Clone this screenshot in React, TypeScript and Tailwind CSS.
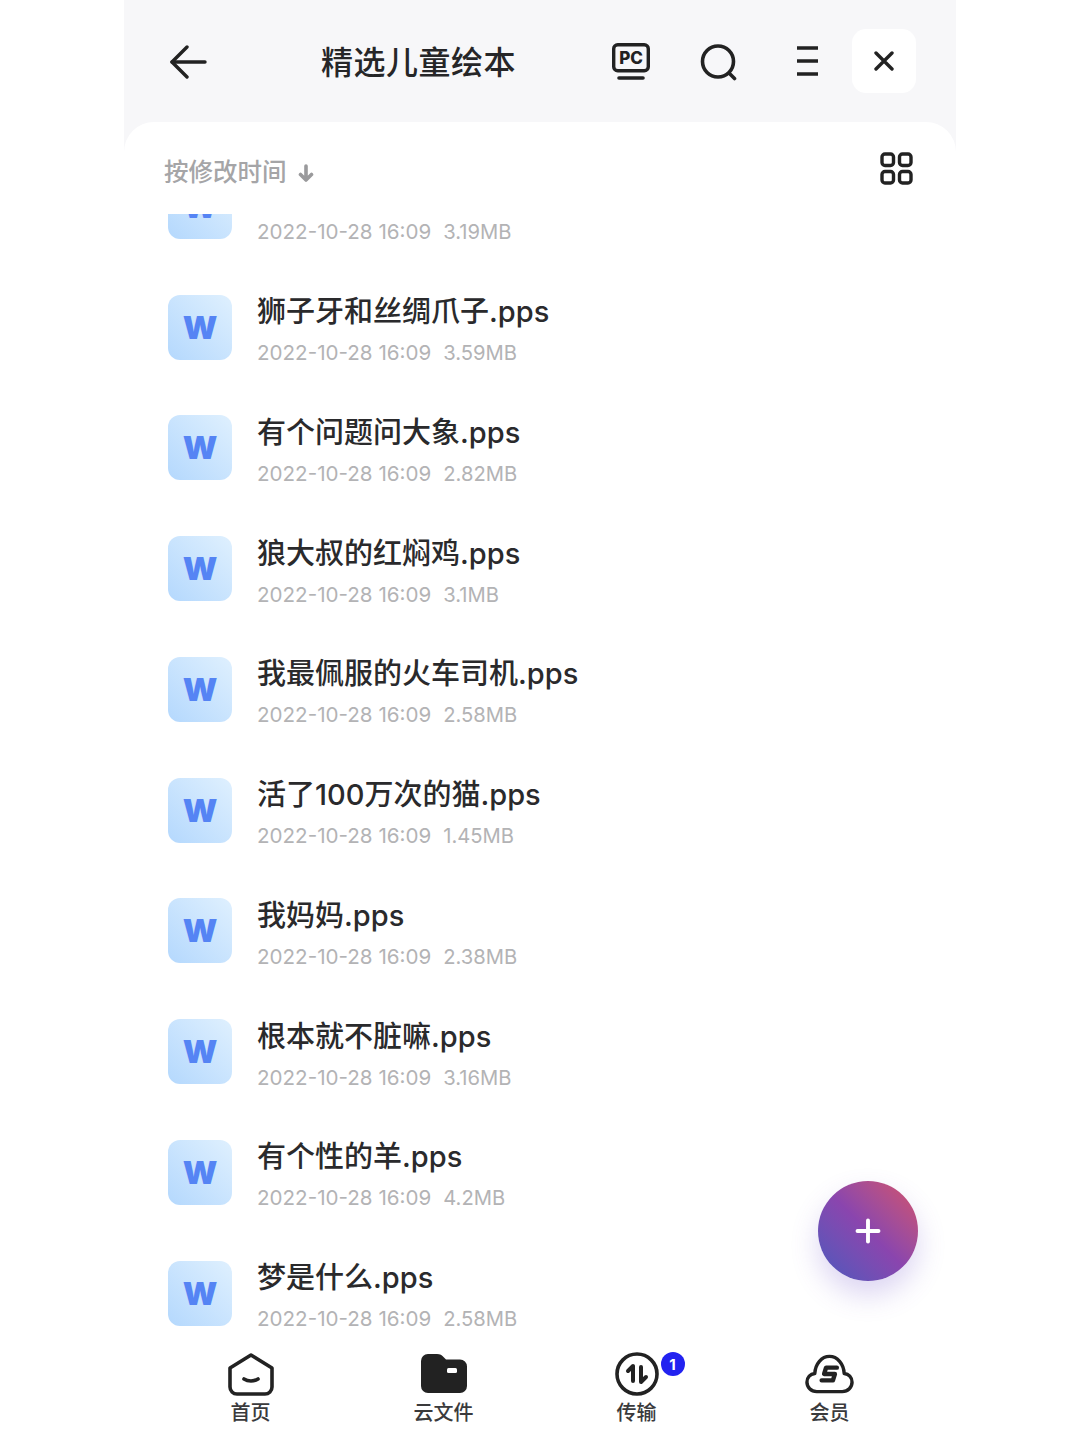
import { Plus } from "lucide-react"

const font = { fontFamily: '"Inter", "Noto Sans CJK SC", sans-serif' }

// the first row is scrolled under the sort bar, only its date line shows
const files = [
  { name: "", date: "2022-10-28 16:09", size: "3.19MB" },
  { name: "狮子牙和丝绸爪子.pps", date: "2022-10-28 16:09", size: "3.59MB" },
  { name: "有个问题问大象.pps", date: "2022-10-28 16:09", size: "2.82MB" },
  { name: "狼大叔的红焖鸡.pps", date: "2022-10-28 16:09", size: "3.1MB" },
  { name: "我最佩服的火车司机.pps", date: "2022-10-28 16:09", size: "2.58MB" },
  { name: "活了100万次的猫.pps", date: "2022-10-28 16:09", size: "1.45MB" },
  { name: "我妈妈.pps", date: "2022-10-28 16:09", size: "2.38MB" },
  { name: "根本就不脏嘛.pps", date: "2022-10-28 16:09", size: "3.16MB" },
  { name: "有个性的羊.pps", date: "2022-10-28 16:09", size: "4.2MB" },
  { name: "梦是什么.pps", date: "2022-10-28 16:09", size: "2.58MB" },
]

function FileRow({ name, date, size }: { name: string; date: string; size: string }) {
  return (
    <div className="flex h-[120.75px] shrink-0 items-center pl-[44px]">
      <div className="flex h-[65px] w-[64px] shrink-0 items-center justify-center rounded-[12px] bg-gradient-to-tr from-[#b4d8fd] to-[#dff0fe] pt-[1px]">
        <span className="text-[32px] leading-none font-black text-[#5584f4]">W</span>
      </div>
      <div className="ml-[25px] flex flex-col pt-[10px]">
        <div className="h-[41px] text-[29px] leading-[41px] font-medium whitespace-nowrap text-[#2a2a2c]">{name}</div>
        <div className="flex h-[41px] items-center text-[20.600px] leading-[41px] whitespace-nowrap text-[#b3b3b5]">
          <span>{date}</span>
          <span className="ml-[12px] text-[20.200px]">{size}</span>
        </div>
      </div>
    </div>
  )
}

function PcIcon() {
  return (
    <svg className="mt-[2px]" width="38" height="38" viewBox="0 0 38 38" fill="none" stroke="#222" strokeWidth="3.4" strokeLinecap="round">
      <rect x="1.700" y="1.700" width="34.600" height="26" rx="4" />
      <path d="M7 35h24" strokeWidth="3.6" />
      <text x="19" y="21" textAnchor="middle" fontSize="17" fontWeight="800" fill="#222" stroke="none" style={font}>PC</text>
    </svg>
  )
}

function SearchIcon() {
  return (
    <svg className="mt-[2px]" width="37" height="37" viewBox="0 0 37 37" fill="none" stroke="#222" strokeWidth="3.6" strokeLinecap="round">
      <circle cx="18" cy="17.500" r="15.500" />
      <path d="M29.500 29.500l5 5" />
    </svg>
  )
}

function HomeIcon() {
  return (
    <svg width="46" height="43" viewBox="0 0 46 43" fill="none" stroke="#222" strokeWidth="3.6" strokeLinecap="round" strokeLinejoin="round">
      <path d="M2 15 23 2l21 13v19a7 7 0 0 1-7 7H9a7 7 0 0 1-7-7z" />
      <path d="M16 26c4 2.600 10 2.600 14 0" />
    </svg>
  )
}

function FolderIcon() {
  return (
    <svg width="46" height="40" viewBox="0 0 46 40">
      <path d="M0 7a7 7 0 0 1 7-7h9c3 0 5 1 7 3.500L25 5.500h14a7 7 0 0 1 7 7V32a7 7 0 0 1-7 7H7a7 7 0 0 1-7-7z" fill="#222" />
      <rect x="26" y="14" width="10" height="5" rx="1.500" fill="#fff" />
    </svg>
  )
}

function TransferIcon() {
  return (
    <svg width="44" height="44" viewBox="0 0 44 44" fill="none" stroke="#222" strokeWidth="3.6" strokeLinecap="round" strokeLinejoin="round">
      <circle cx="22" cy="22" r="20" />
      <path d="M13 19l5-5v15" strokeWidth="4" />
      <path d="M26 15v15l5-5" strokeWidth="4" />
    </svg>
  )
}

function VipIcon() {
  return (
    <svg width="49" height="40" viewBox="0 0 50 40" fill="none" stroke="#222" strokeWidth="3.500" strokeLinecap="round" strokeLinejoin="round">
      <path d="M12 38C6 38 2 33.500 2 28.500 2 23.500 5.500 20 10 19.500 10.500 9.500 17 2 25 2s14.500 7.500 15 17.500C44.500 20 48 23.500 48 28.500 48 33.500 44 38 38 38z" />
      <path d="M32.500 13.500H21.500L19.500 20h11l-2 6.500H17" strokeWidth="4.500" />
    </svg>
  )
}

const tabs = [
  { label: "首页", icon: <HomeIcon /> },
  { label: "云文件", icon: <FolderIcon /> },
  { label: "传输", icon: <TransferIcon /> },
  { label: "会员", icon: <VipIcon /> },
]

export default function App() {
  return (
    <div className="flex h-[1440px] justify-center overflow-hidden bg-white" style={font}>
      <div className="relative flex w-[832px] flex-col bg-[#f7f7f9]">
        {/* top bar */}
        <div className="flex h-[122px] shrink-0 items-center pl-[46px]">
          <svg className="mt-[2px]" width="37" height="34" viewBox="0 0 37 34" fill="none" stroke="#222" strokeWidth="3.4" strokeLinecap="round" strokeLinejoin="round">
            <path d="M35 17H2" />
            <path d="M17 2 2 17l15 15" />
          </svg>
          <div className="ml-[114px] w-[291px] pt-[3px] text-[32px] leading-none font-medium tracking-[0.5px] whitespace-nowrap text-[#262628]">
            精选儿童绘本
          </div>
          <PcIcon />
          <div className="ml-[50px]">
            <SearchIcon />
          </div>
          <svg className="ml-[59px]" width="23" height="30" viewBox="0 0 23 30" fill="none" stroke="#222" strokeWidth="3.4">
            <path d="M1 2h21M1 15h21M1 28h21" />
          </svg>
          <div className="ml-[33px] flex h-[64px] w-[64px] items-center justify-center rounded-[14px] bg-white">
            <svg width="20" height="20" viewBox="0 0 20 20" fill="none" stroke="#222" strokeWidth="3.4" strokeLinecap="round">
              <path d="M2 2l16 16M18 2 2 18" />
            </svg>
          </div>
        </div>

        {/* card */}
        <div className="flex min-h-0 flex-1 flex-col rounded-t-[30px] bg-white">
          <div className="flex h-[92px] shrink-0 items-center justify-between pr-[43px] pl-[40px]">
            <div className="flex items-center pt-[9px] text-[24.500px] leading-none font-medium text-[#a5a5a7]">
              按修改时间
              <svg className="ml-[10px]" width="18" height="18" viewBox="0 0 18 18" fill="none" stroke="#9a9a9c" strokeWidth="3.6" strokeLinecap="round" strokeLinejoin="round">
                <path d="M9 2v14M3.500 10.500 9 16l5.500-5.500" />
              </svg>
            </div>
            <svg width="33" height="33" viewBox="0 0 33 33" fill="none" stroke="#222" strokeWidth="3.4">
              <rect x="2" y="2" width="11.500" height="11.500" rx="3" />
              <rect x="19.500" y="2" width="11.500" height="11.500" rx="3" />
              <rect x="2" y="19.500" width="11.500" height="11.500" rx="3" />
              <rect x="19.500" y="19.500" width="11.500" height="11.500" rx="3" />
            </svg>
          </div>

          {/* file list, scrolled so the first row is cut off */}
          <div className="h-[1116px] shrink-0 overflow-hidden">
            <div className="mt-[-68px] flex flex-col">
              {files.map((file) => (
                <FileRow key={file.size + file.name} {...file} />
              ))}
            </div>
          </div>

          {/* bottom tabs */}
          <div className="grid min-h-0 flex-1 grid-cols-4 px-[30px] pt-[21px]">
            {tabs.map((tab, i) => (
              <div key={tab.label} className="flex flex-col items-center">
                <div className="relative flex h-[46px] items-center justify-center">
                  {tab.icon}
                  {i === 2 && (
                    <span className="absolute top-[1px] left-[46px] flex h-[24px] w-[24px] items-center justify-center rounded-full bg-[#2222f0] text-[15px] leading-none font-bold text-white">
                      1
                    </span>
                  )}
                </div>
                <div className="mt-[2px] text-[20px] leading-[28px] font-medium text-[#3a3a3c]">{tab.label}</div>
              </div>
            ))}
          </div>
        </div>

        {/* add button */}
        <div className="absolute top-[1181px] left-[694px] flex h-[100px] w-[100px] items-center justify-center rounded-full bg-gradient-to-bl from-[#d64f66] via-[#8a45ae] to-[#4558bd] shadow-[0_14px_28px_rgba(110,80,200,0.24)]">
          <Plus size={36} color="#fff" strokeWidth={2.6} />
        </div>
      </div>
    </div>
  )
}
